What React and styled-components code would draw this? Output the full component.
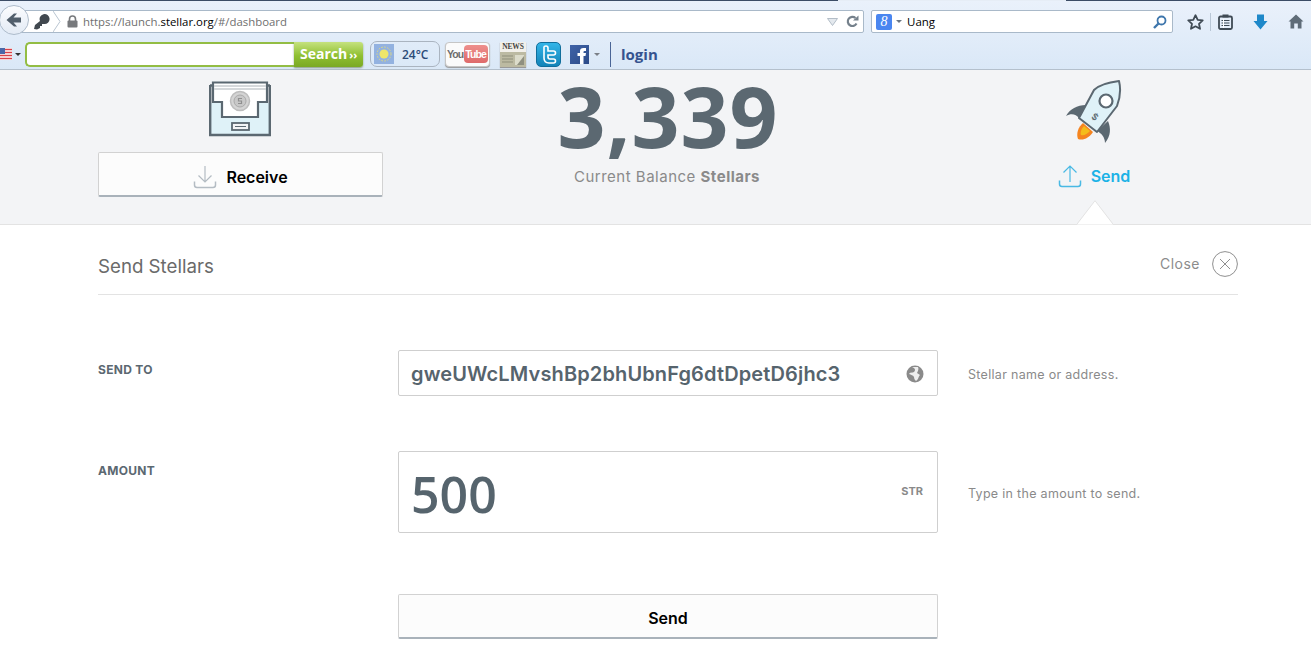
import React from "react";
import styled, { createGlobalStyle } from "styled-components";

const Global = createGlobalStyle`
  html, body { margin: 0; padding: 0; background: #fff; }
  body { font-family: Inter, "Noto Sans", sans-serif; width: 1311px; height: 665px; overflow: hidden; }
  * { box-sizing: border-box; }
`;

const Chrome = styled.header`
  height: 70px;
  background: linear-gradient(#eaf1fb, #dae8f7);
  border-bottom: 1px solid #b4c0cc;
  font-family: "Open Sans", sans-serif;
  position: relative;
`;
const TabEdge = styled.div`
  height: 1px;
  background: linear-gradient(90deg, #3c4d66 0, #3c4d66 838px, #e6edf6 838px, #e6edf6 1066px, #3c4d66 1066px);
`;
const NavRow = styled.div`
  height: 39px;
  display: flex;
  align-items: flex-start;
  padding-top: 9px;
`;
const BackCircle = styled.div`
  position: absolute;
  left: -1px;
  top: 5px;
  width: 30px;
  height: 30px;
  border-radius: 50%;
  background: linear-gradient(#fbfcfe, #e3ebf5);
  border: 1px solid #aebccb;
  display: flex;
  align-items: center;
  justify-content: center;
  z-index: 2;
`;
const UrlBar = styled.div`
  margin-left: 12px;
  width: 852px;
  height: 23px;
  background: #fff;
  border: 1px solid #a9b9c9;
  border-radius: 2px;
  display: flex;
  align-items: center;
  padding-left: 20px;
  font-size: 11.4px;
  color: #6f6f6f;
`;
const KeyWrap = styled.span`
  display: flex;
  width: 20px;
`;
const Lock = styled.span`
  display: flex;
  margin: 0 5px 0 6px;
`;
const Host = styled.span`
  color: #000;
`;
const UrlEnd = styled.span`
  margin-left: auto;
  display: flex;
  align-items: center;
  gap: 8px;
  padding-right: 4px;
`;
const SearchBar = styled.div`
  margin-left: 7px;
  width: 302px;
  height: 23px;
  background: #fff;
  border: 1px solid #a9b9c9;
  border-radius: 2px;
  display: flex;
  align-items: center;
  padding: 0 5px 0 4px;
  font-size: 11.5px;
  color: #000;
`;
const GBadge = styled.span`
  width: 16px;
  height: 16px;
  background: #4a86f0;
  border-radius: 2px;
  color: #fff;
  font: italic 14px/16px "Liberation Serif", serif;
  text-align: center;
`;
const TinyCaret = styled.span`
  width: 0;
  height: 0;
  margin: ${(p) => p.$margin || "0 5px 0 4px"};
  border-left: 3px solid transparent;
  border-right: 3px solid transparent;
  border-top: 3px solid ${(p) => p.$color || "#6b7682"};
`;
const Spacer = styled.span`
  flex: 1;
`;
const Tools = styled.div`
  display: flex;
  align-items: center;
  margin-left: 14px;
  height: 23px;
`;
const ToolSlot = styled.span`
  display: flex;
  justify-content: center;
  width: ${(p) => p.$w}px;
`;
const ToolSep = styled.span`
  width: 1px;
  height: 18px;
  background: #b9c7d6;
  margin: 0 7px 0 6px;
`;
const BookmarkRow = styled.div`
  height: 28px;
  display: flex;
  align-items: center;
`;
const Flag = styled.span`
  display: flex;
  margin-left: -2px;
`;
const FindInput = styled.div`
  width: 269px;
  height: 25px;
  background: #fff;
  border: 2px solid #93bd44;
  border-right: 0;
  border-radius: 5px 0 0 5px;
  margin-left: 1px;
`;
const FindButton = styled.div`
  width: 69px;
  height: 25px;
  background: linear-gradient(#c5e27e, #8fbf31 55%, #7aa924);
  border-radius: 0 3px 3px 0;
  box-shadow: 0 1px 2px #8a9a80;
  color: #fff;
  font: bold 14px/23px "Open Sans", sans-serif;
  padding-left: 6px;
  white-space: nowrap;
`;
const Chevrons = styled.span`
  font-size: 11px;
  margin-left: 2px;
`;
const Weather = styled.div`
  width: 70px;
  height: 26px;
  margin-left: 7px;
  border: 1px solid #aab4c0;
  border-radius: 7px;
  display: flex;
  align-items: center;
  padding-left: 3px;
  gap: 8px;
  font: 600 12px "Open Sans", sans-serif;
  color: #2c4a78;
`;
const SunTile = styled.span`
  display: flex;
  width: 20px;
  height: 20px;
`;
const YouTube = styled.div`
  width: 45px;
  height: 25px;
  margin-left: 5px;
  border-radius: 4px;
  background: #fbfbfb;
  border: 1px solid #c6c6c6;
  box-shadow: 0 1px 1px #999;
  display: flex;
  align-items: center;
  justify-content: center;
  gap: 1px;
  font: bold 10.5px "Liberation Sans", sans-serif;
  letter-spacing: -0.9px;
  color: #6d6d6d;
`;
const Tube = styled.span`
  background: linear-gradient(#ee8f8c, #de6a6a);
  color: #fff;
  border-radius: 4px;
  padding: 3px 2px 3px 1px;
`;
const News = styled.div`
  width: 26px;
  height: 25px;
  margin-left: 10px;
  background: #f2f0ea;
  font: bold 7.5px/10px "Liberation Serif", serif;
  color: #444;
  text-align: center;
  letter-spacing: -0.2px;
  box-shadow: 0 1px 1px #999;
  display: flex;
  flex-direction: column;
`;
const Twitter = styled.div`
  width: 25px;
  height: 25px;
  margin-left: 10px;
  border-radius: 5px;
  background: linear-gradient(#33b5e8, #1283b8);
  border: 1px solid #106e9c;
  display: flex;
  align-items: center;
  justify-content: center;
`;
const Facebook = styled.div`
  width: 19px;
  height: 19px;
  margin-left: 9px;
  background: linear-gradient(135deg, #3f63a8, #2c4b88);
  display: flex;
  overflow: hidden;
`;
const BarDivider = styled.span`
  width: 1px;
  height: 25px;
  background: #4a6596;
  margin-left: 10px;
`;
const Login = styled.span`
  margin-left: 10px;
  font: 700 15px "Open Sans", sans-serif;
  color: #35538f;
`;

const Hero = styled.section`
  height: 155px;
  background: #f3f4f6;
  border-bottom: 1px solid #e3e3e3;
  display: grid;
  grid-template-columns: 285px 568px 288px;
  padding-left: 98px;
  position: relative;
`;
const Col = styled.div`
  display: flex;
  flex-direction: column;
  align-items: center;
`;
const IconTop = styled.div`
  margin: ${(p) => p.$top}px 0 0 ${(p) => p.$left || 0}px;
  display: flex;
  height: ${(p) => p.$h}px;
`;
const GhostButton = styled.button`
  width: ${(p) => p.$w || "100%"};
  height: 45px;
  background: #fcfcfc;
  border: 1px solid #d2d2d2;
  border-bottom: 2px solid #a9b2ba;
  border-radius: 2px;
  display: flex;
  align-items: center;
  justify-content: center;
  gap: 9px;
  font: 600 16px Inter, sans-serif;
  color: #000;
  padding: ${(p) => p.$top || 4}px 0 0;
`;
const Balance = styled.div`
  font: 700 84px/1 "Open Sans", sans-serif;
  color: #5b6871;
  margin: 4px 0 0 2px;
  height: 93px;
  letter-spacing: 1px;
`;
const BalanceNote = styled.div`
  font: 400 15px Inter, sans-serif;
  color: #8a8a8a;
  letter-spacing: 0.5px;
  b { font-weight: 700; color: #8a8a8a; }
`;
const SendLink = styled.div`
  display: flex;
  align-items: center;
  gap: 9px;
  margin: 20px 0 0 -2px;
  font: 600 16px Inter, sans-serif;
  color: #1bb2e6;
`;
const Notch = styled.svg`
  position: absolute;
  left: 1077px;
  top: 130px;
`;

const Form = styled.main`
  width: 1140px;
  margin-left: 98px;
`;
const FormHead = styled.div`
  height: 70px;
  border-bottom: 1px solid #e3e3e3;
  display: flex;
  align-items: center;
  padding-top: 11px;
  justify-content: space-between;
`;
const FormTitle = styled.h2`
  margin: 3px 0 0;
  font: 400 18.7px Inter, sans-serif;
  color: #6a6a6a;
`;
const CloseRow = styled.div`
  display: flex;
  align-items: center;
  gap: 12px;
  font: 400 14px Inter, sans-serif;
  color: #8c8c8c;
  letter-spacing: 0.5px;
  margin-bottom: 2px;
`;
const CloseText = styled.span`
  margin-bottom: 2px;
`;
const Row = styled.div`
  display: grid;
  grid-template-columns: 300px 540px 1fr;
  margin-top: ${(p) => p.$top}px;
`;
const Label = styled.label`
  font: 700 12px Inter, sans-serif;
  color: #5b6871;
  letter-spacing: 0.3px;
  padding-top: ${(p) => p.$top}px;
`;
const Field = styled.div`
  height: ${(p) => p.$h}px;
  border: 1px solid #cfcfcf;
  border-radius: 2px;
  background: #fff;
  display: flex;
  align-items: center;
  justify-content: space-between;
  padding: ${(p) => p.$pad};
  color: #56646d;
`;
const AddressText = styled.span`
  font: 600 20px Inter, sans-serif;
  letter-spacing: 0.13px;
`;
const AmountText = styled.span`
  font: 600 50px "Open Sans", sans-serif;
`;
const Unit = styled.span`
  font: 700 11px Inter, sans-serif;
  color: #8a8a8a;
  margin-bottom: 7px;
`;
const Hint = styled.div`
  font: 400 12.5px Inter, sans-serif;
  color: #8a8a8a;
  letter-spacing: 0.3px;
  padding: ${(p) => p.$top}px 0 0 30px;
`;
const SubmitRow = styled.div`
  margin: 61px 0 0 300px;
`;

const Rocket = () => (
  <svg width="60" height="64" viewBox="0 0 60 64">
    <path d="M21 25 C12 25 5 29 1 36 C6 33 11 34 14 38Z" fill="#5b6871" />
    <path d="M43 41 C46 48 46 56 40 63 C40 57 36 53 32 51Z" fill="#5b6871" />
    <path d="M18 43 C13 47 11 54 13 59 C18 61 24 58 28 52Z" fill="#f5841f" />
    <path d="M19 46 C16 49 15 53 16 55 C19 56 22 54 25 51Z" fill="#f4bc1a" />
    <path d="M14 38 L29 10 C34 5 46 2 54 1 C56 9 55 18 52 26 L32 52 Z" fill="#dff2f8" stroke="#5b6871" strokeWidth="2" strokeLinejoin="round" />
    <circle cx="41" cy="21" r="6.5" fill="#fff" stroke="#5b6871" strokeWidth="2.2" />
    <text x="30" y="40" fontSize="9" fontFamily="Inter, sans-serif" fontWeight="600" fill="#5b6871" textAnchor="middle" transform="rotate(35 30 37)">$</text>
  </svg>
);

const Drawer = () => (
  <svg width="62" height="56" viewBox="0 0 62 56">
    <rect x="1" y="22" width="60" height="32" fill="#dff2f8" />
    <path d="M1 4.5 H61 M1.2 4 V54 H60.8 V4" fill="none" stroke="#5b6871" strokeWidth="2.4" />
    <path d="M4 1.5 H58 V21 H49 V36 H13 V21 H4Z" fill="#fff" stroke="#5b6871" strokeWidth="2.2" />
    <path d="M5 5 H57 M5 8 H57" stroke="#c9cdd0" strokeWidth="1.3" />
    <circle cx="31" cy="20" r="9.5" fill="#d4d4d4" stroke="#bdbdbd" strokeWidth="1.5" />
    <circle cx="31" cy="20" r="6" fill="#c8c8c8" stroke="#aaa" />
    <path d="M33 17.5 H29.5 V20 H32.5 V22.5 H29" fill="none" stroke="#8f8f8f" strokeWidth="1.2" />
    <rect x="23" y="42" width="17" height="7" fill="#f3f4f6" stroke="#5b6871" strokeWidth="1.8" />
    <path d="M26 45.5 H37" stroke="#5b6871" />
  </svg>
);

const ArrowTray = ({ up, color }) => (
  <svg width="24" height="24" viewBox="0 0 24 24" fill="none" stroke={color} strokeWidth="1.2">
    <path d="M1.5 16.5 V20 Q1.5 22.5 4 22.5 H20 Q22.5 22.5 22.5 20 V16.5" strokeWidth="1.5" />
    {up ? <path d="M12 18 V2 M5.5 8.5 L12 2 L18.5 8.5" /> : <path d="M12 1 V17 M5.5 10.5 L12 17 L18.5 10.5" />}
  </svg>
);

export default function App() {
  return (
    <>
      <Global />
      <Chrome>
        <TabEdge />
        <NavRow>
          <BackCircle>
            <svg width="16" height="14" viewBox="0 0 16 14"><path d="M8 0.5 L0.5 7 L8 13.5 H11 L7.5 9.5 H15 V4.5 H7.5 L11 0.5Z" fill="#515f6c" /></svg>
          </BackCircle>
          <UrlBar>
            <KeyWrap>
              <svg width="18" height="18" viewBox="0 0 18 18"><path d="M1 16 L2 12 L7 8 A5 5 0 1 1 11 11 L9 11 L9 13 L7 13 L7 15 L4 16.5Z" fill="#41484f" /></svg>
            </KeyWrap>
            <svg width="8" height="21" viewBox="0 0 8 21"><path d="M0 0 L7 10.5 L0 21" fill="none" stroke="#b9c5d1" /></svg>
            <Lock>
              <svg width="11" height="13" viewBox="0 0 11 13"><path d="M2.5 6 V4 A3 3 0 0 1 8.5 4 V6" fill="none" stroke="#77797c" strokeWidth="1.6" /><rect x="0.5" y="5.5" width="10" height="7" rx="1" fill="#77797c" /></svg>
            </Lock>
            <span>https://launch.<Host>stellar.org</Host>/#/dashboard</span>
            <UrlEnd>
              <svg width="11" height="8" viewBox="0 0 11 8"><path d="M0.5 0.5 H10.5 L5.5 7.5Z" fill="#e4e9ee" stroke="#b3bdc7" /></svg>
              <svg width="13" height="13" viewBox="0 0 13 13"><path d="M10.5 8.5 A4.6 4.6 0 1 1 9.5 3" fill="none" stroke="#75818c" strokeWidth="2.2" /><path d="M7 5.5 H12.5 V0.5Z" fill="#75818c" /></svg>
            </UrlEnd>
          </UrlBar>
          <SearchBar>
            <GBadge>8</GBadge>
            <TinyCaret />
            <span>Uang</span>
            <Spacer />
            <svg width="14" height="14" viewBox="0 0 14 14"><circle cx="8.5" cy="5.5" r="4" fill="none" stroke="#3e76ac" strokeWidth="1.8" /><path d="M5.5 8.5 L1 13" stroke="#3e76ac" strokeWidth="2.4" /></svg>
          </SearchBar>
          <Tools>
            <ToolSlot $w={17}>
              <svg width="17" height="16" viewBox="0 0 17 16"><path d="M8.5 1.2 L10.7 5.8 L15.7 6.4 L12 9.8 L13 14.8 L8.5 12.3 L4 14.8 L5 9.8 L1.3 6.4 L6.3 5.8Z" fill="none" stroke="#3f4a54" strokeWidth="1.8" strokeLinejoin="round" /></svg>
            </ToolSlot>
            <ToolSep />
            <ToolSlot $w={15}>
              <svg width="15" height="16" viewBox="0 0 15 16"><rect x="1" y="2.5" width="13" height="12.5" rx="1.5" fill="none" stroke="#3f4a54" strokeWidth="1.8" /><rect x="4.5" y="0.5" width="6" height="3" fill="#3f4a54" /><path d="M3.5 6.5 H11.5 M3.5 9 H11.5 M3.5 11.5 H11.5" stroke="#3f4a54" /><path d="M5.5 5 V14" stroke="#fff" /></svg>
            </ToolSlot>
            <ToolSlot $w={54}>
              <svg width="15" height="16" viewBox="0 0 15 16"><path d="M4 0.5 H11 V7 H14.5 L7.5 15.5 L0.5 7 H4Z" fill="#1e88c9" /></svg>
            </ToolSlot>
            <ToolSlot $w={17}>
              <svg width="16" height="15" viewBox="0 0 16 15"><path d="M8 0.5 L15.5 7.5 L13.5 7.5 V14.5 H9.8 V9.5 H6.2 V14.5 H2.5 V7.5 L0.5 7.5Z" fill="#5f6c78" /></svg>
            </ToolSlot>
          </Tools>
        </NavRow>
        <BookmarkRow>
          <Flag>
            <svg width="14" height="12" viewBox="0 0 14 12"><rect width="14" height="12" fill="#fff" /><path d="M0 1.5 H14 M0 4.5 H14 M0 7.5 H14 M0 10.5 H14" stroke="#d9434a" strokeWidth="1.5" /><rect width="7" height="6" fill="#4a68a8" /></svg>
          </Flag>
          <TinyCaret $margin="0 3px 0 3px" $color="#333" />
          <FindInput />
          <FindButton>Search<Chevrons>››</Chevrons></FindButton>
          <Weather>
            <SunTile>
              <svg width="20" height="20" viewBox="0 0 20 20"><rect width="20" height="20" fill="#93b2e0" /><circle cx="10" cy="10" r="4.5" fill="#eee66a" /><circle cx="10" cy="10" r="7" fill="none" stroke="#e6dd77" strokeDasharray="1.5 1.5" /></svg>
            </SunTile>
            24°C
          </Weather>
          <YouTube>You<Tube>Tube</Tube></YouTube>
          <News>
            NEWS
            <svg width="26" height="15" viewBox="0 0 26 15"><rect width="26" height="15" fill="#bcbaa2" /><path d="M2 4 H13 M2 7 H13 M2 10 H13" stroke="#8f8f7a" /><path d="M15 3 H24 V13 H15Z" fill="#dcdccb" /><path d="M17 13 L24 4 V13Z" fill="#8f9080" /></svg>
          </News>
          <Twitter>
            <svg width="16" height="19" viewBox="0 0 16 19"><path d="M3 2 Q3 1 5 1 Q7 1 7 3 V6 H12.5 Q14.5 6 14.5 8 Q14.5 10 12.5 10 H7 V12 Q7 14 9 14 H12.5 Q14.5 14 14.5 16 Q14.5 18 12.5 18 H8 Q3 18 3 13Z" fill="none" stroke="#fff" strokeWidth="1.6" /></svg>
          </Twitter>
          <Facebook>
            <svg width="19" height="19" viewBox="0 0 19 19"><path d="M10 19 V11 H7.5 V8 H10 V6 Q10 3 13.5 3 H16 V6 H14.5 Q13.5 6 13.5 7 V8 H16 L15.5 11 H13.5 V19Z" fill="#fff" /></svg>
          </Facebook>
          <TinyCaret $margin="0 0 0 5px" $color="#7a7f86" />
          <BarDivider />
          <Login>login</Login>
        </BookmarkRow>
      </Chrome>
      <Hero>
        <Col>
          <IconTop $top={11} $left={-2} $h={71}><Drawer /></IconTop>
          <GhostButton $top={6}>
            <ArrowTray color="#b4bcc3" />
            Receive
          </GhostButton>
        </Col>
        <Col>
          <Balance>3,339</Balance>
          <BalanceNote>Current Balance <b>Stellars</b></BalanceNote>
        </Col>
        <Col>
          <IconTop $top={10} $h={64}><Rocket /></IconTop>
          <SendLink>
            <ArrowTray up color="#49b9e4" />
            Send
          </SendLink>
        </Col>
        <Notch width="36" height="25" viewBox="0 0 36 25">
          <path d="M0 24.5 L18 0.7 L36 24.5Z" fill="#fff" />
          <path d="M0 24 L18 0.7 L36 24" fill="none" stroke="#e3e3e3" />
        </Notch>
      </Hero>
      <Form>
        <FormHead>
          <FormTitle>Send Stellars</FormTitle>
          <CloseRow>
            <CloseText>Close</CloseText>
            <svg width="26" height="26" viewBox="0 0 26 26" fill="none" stroke="#8f8f8f"><circle cx="13" cy="13" r="12.4" /><path d="M8 8 L18 18 M18 8 L8 18" /></svg>
          </CloseRow>
        </FormHead>
        <Row $top={55}>
          <Label $top={12}>SEND TO</Label>
          <Field $h={46} $pad="2px 13px 0 12px">
            <AddressText>gweUWcLMvshBp2bhUbnFg6dtDpetD6jhc3</AddressText>
            <svg width="18" height="18" viewBox="0 0 18 18"><circle cx="9" cy="9" r="8.5" fill="#8a8a8a" /><path d="M6 2 C9 3 10 5 8 7 C6 8 4 7 3 9 C5 10 7 10 8 12 C8 14 9 15 10 16 C13 14 12 12 14 10 L11 8 C12 6 13 4 12 2Z" fill="#fff" opacity="0.85" /></svg>
          </Field>
          <Hint $top={17}>Stellar name or address.</Hint>
        </Row>
        <Row $top={55}>
          <Label $top={12}>AMOUNT</Label>
          <Field $h={82} $pad="4px 14px 0 12px">
            <AmountText>500</AmountText>
            <Unit>STR</Unit>
          </Field>
          <Hint $top={35}>Type in the amount to send.</Hint>
        </Row>
        <SubmitRow>
          <GhostButton $w="540px">Send</GhostButton>
        </SubmitRow>
      </Form>
    </>
  );
}
